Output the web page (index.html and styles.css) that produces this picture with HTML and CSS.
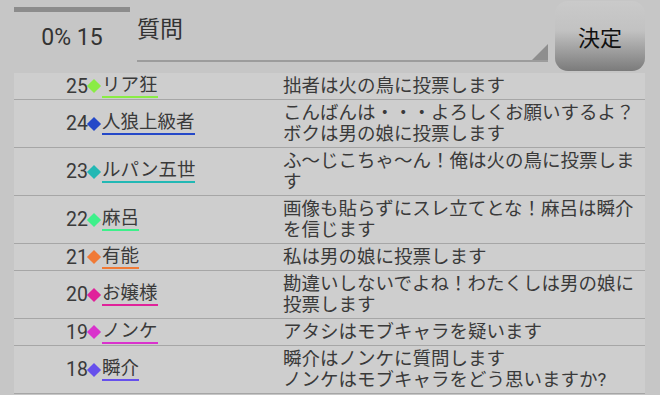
FILE: index.html
```html
<!DOCTYPE html>
<html lang="ja">
<head>
    <meta charset="UTF-8">
    <title>投票</title>
    <link rel="stylesheet" href="styles.css">
</head>
<body>

    <div class="top">
        <div class="status">
            <div class="progress"></div>
            <div class="count">0% 15</div>
        </div>
        <div class="select">
            <span class="select-text">質問</span>
            <span class="select-arrow"></span>
        </div>
        <button class="decide">決定</button>
    </div>

    <!-- 発言一覧 -->
    <div class="log">
        <div class="row">
            <div class="who"><span class="num">25</span><span class="mark c-lime"></span><span class="name u-lime">リア狂</span></div>
            <div class="msg">拙者は火の鳥に投票します</div>
        </div>
        <div class="row">
            <div class="who"><span class="num">24</span><span class="mark c-blue"></span><span class="name u-blue">人狼上級者</span></div>
            <div class="msg">こんばんは・・・よろしくお願いするよ？<br>ボクは男の娘に投票します</div>
        </div>
        <div class="row">
            <div class="who"><span class="num">23</span><span class="mark c-teal"></span><span class="name u-teal">ルパン五世</span></div>
            <div class="msg">ふ～じこちゃ～ん！俺は火の鳥に投票します</div>
        </div>
        <div class="row">
            <div class="who"><span class="num">22</span><span class="mark c-green"></span><span class="name u-green">麻呂</span></div>
            <div class="msg">画像も貼らずにスレ立てとな！麻呂は瞬介を信じます</div>
        </div>
        <div class="row">
            <div class="who"><span class="num">21</span><span class="mark c-orange"></span><span class="name u-orange">有能</span></div>
            <div class="msg">私は男の娘に投票します</div>
        </div>
        <div class="row">
            <div class="who"><span class="num">20</span><span class="mark c-pink"></span><span class="name u-pink">お嬢様</span></div>
            <div class="msg">勘違いしないでよね！わたくしは男の娘に投票します</div>
        </div>
        <div class="row">
            <div class="who"><span class="num">19</span><span class="mark c-magenta"></span><span class="name u-magenta">ノンケ</span></div>
            <div class="msg">アタシはモブキャラを疑います</div>
        </div>
        <div class="row">
            <div class="who"><span class="num">18</span><span class="mark c-violet"></span><span class="name u-violet">瞬介</span></div>
            <div class="msg">瞬介はノンケに質問します<br>ノンケはモブキャラをどう思いますか?</div>
        </div>
    </div>

</body>
</html>
```

FILE: styles.css
```css
/* 全体 */
body {
    margin: 0;
    width: 660px;
    height: 395px;
    overflow: hidden;
    background-color: #c6c6c6;
    font-family: Roboto, "Noto Sans CJK JP", sans-serif;
    color: #3a3a3a;
}

/* 上部バー */
.top {
    display: flex;
    height: 72px;
    padding: 0 15px 0 14px;
    box-sizing: border-box;
}

.status {
    width: 116px;
}

.progress {
    margin-top: 7px;
    height: 5px;
    background-color: #8c8c8c;
}

.count {
    margin-top: 12px;
    text-align: center;
    font-size: 23px;
    color: #333;
}

.select {
    flex: 1;
    position: relative;
    height: 62px;
    margin: 0 7px;
    border-bottom: 2px solid #9c9c9c;
    box-sizing: border-box;
}

.select-text {
    display: block;
    padding-top: 17px;
    font-size: 23px;
    line-height: 26px;
    color: #333;
}

.select-arrow {
    position: absolute;
    right: 0;
    bottom: 0;
    width: 0;
    height: 0;
    border-left: 16px solid transparent;
    border-bottom: 16px solid #8e8e8e;
}

.decide {
    width: 90px;
    height: 70px;
    margin-top: 1px;
    border: none;
    border-radius: 13px;
    background: linear-gradient(#cacaca 0%, #c2c2c2 42%, #7b7b7b 100%);
    font-family: "Noto Sans CJK JP", sans-serif;
    font-size: 22px;
    color: #111;
    padding: 0;
}

/* 発言一覧 */
.log {
    margin: 1px 15px 0 14px;
    background-color: #cecece;
}

.row {
    display: flex;
    align-items: center;
    border-bottom: 1px solid #a6a6a6;
    font-size: 18.5px;
}

.who {
    width: 269px;
    padding-left: 52px;
    box-sizing: border-box;
    display: flex;
    align-items: center;
}

.num {
    width: 23px;
    font-size: 19.5px;
}

.mark {
    flex-shrink: 0;
    width: 10px;
    height: 10px;
    margin: 0 3px 0 0;
    transform: rotate(45deg);
}

.name {
    line-height: 20px;
    padding-bottom: 1px;
    border-bottom: 2px solid;
}

.msg {
    flex: 1;
    padding: 3px 4px 2px 0;
    line-height: 21px;
}

.c-lime { background-color: #8aec45; }
.c-blue { background-color: #2448c8; }
.c-teal { background-color: #22b8b4; }
.c-green { background-color: #3ef08a; }
.c-orange { background-color: #f07a36; }
.c-pink { background-color: #e0229a; }
.c-magenta { background-color: #d932cc; }
.c-violet { background-color: #6650ec; }

.u-lime { border-color: #8aec45; }
.u-blue { border-color: #2448c8; }
.u-teal { border-color: #22b8b4; }
.u-green { border-color: #3ef08a; }
.u-orange { border-color: #f07a36; }
.u-pink { border-color: #e0229a; }
.u-magenta { border-color: #d932cc; }
.u-violet { border-color: #6650ec; }
```
